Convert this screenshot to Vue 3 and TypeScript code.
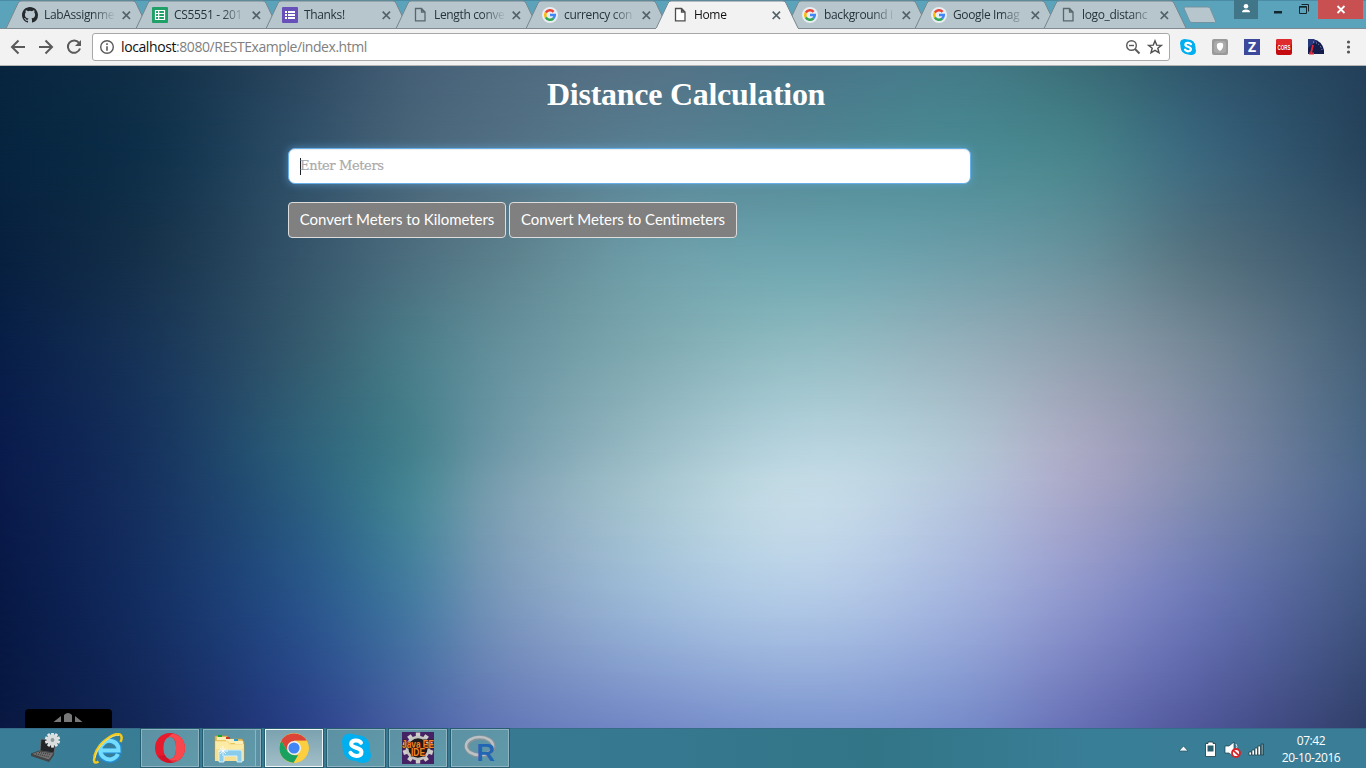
<script setup lang="ts">
interface Tab {
  title: string
  icon: 'github' | 'sheet' | 'form' | 'doc' | 'google'
  width: number
  active?: boolean
}

const tabs: Tab[] = [
  { title: 'LabAssignme', icon: 'github', width: 130 },
  { title: 'CS5551 - 201', icon: 'sheet', width: 130 },
  { title: 'Thanks!', icon: 'form', width: 130 },
  { title: 'Length conve', icon: 'doc', width: 130 },
  { title: 'currency con', icon: 'google', width: 130 },
  { title: 'Home', icon: 'doc', width: 130, active: true },
  { title: 'background i', icon: 'google', width: 129 },
  { title: 'Google Imag', icon: 'google', width: 129 },
  { title: 'logo_distanc', icon: 'doc', width: 129 },
]

// Backdrop: a coarse colour mesh, resampled with cubic curves in both directions.
const meshX = [0, 150, 300, 410, 500, 650, 800, 950, 1080, 1200, 1366]
const meshRows: { y: number; colors: string[] }[] = [
  { y: 0, colors: ['#08253f', '#123048', '#2c4860', '#445f76', '#4d697e', '#557286', '#4a7689', '#457b89', '#3b6e78', '#2f566c', '#24405a'] },
  { y: 84, colors: ['#06243f', '#0f304a', '#2f4f68', '#486579', '#527083', '#588092', '#528593', '#4b8a94', '#47828a', '#3a667d', '#27445c'] },
  { y: 184, colors: ['#07203f', '#16324b', '#34546a', '#4c6d7e', '#5b7f8c', '#6c9ca7', '#6ba3ad', '#6b9da8', '#66909b', '#53717f', '#36536a'] },
  { y: 284, colors: ['#081e47', '#183558', '#345a6e', '#4a7c88', '#64909c', '#80aab2', '#92bcc3', '#96b2bd', '#8e9fad', '#758898', '#446078'] },
  { y: 384, colors: ['#091b4c', '#16335e', '#2d607a', '#437f8c', '#7099a8', '#9bbdc7', '#b8d4df', '#b3c9d6', '#aaa9c4', '#858eab', '#496686'] },
  { y: 434, colors: ['#091a4a', '#163260', '#2a5c7e', '#468595', '#7da0b2', '#a7c6d1', '#c6dce7', '#b6c7de', '#a5a5c8', '#7f8aaf', '#4b648c'] },
  { y: 534, colors: ['#071845', '#142f63', '#285389', '#447aa0', '#7997ba', '#9ebbd9', '#b2cae6', '#a4b5de', '#8d95cb', '#6b77b5', '#415681'] },
  { y: 662, colors: ['#081841', '#14285a', '#2a4088', '#4a60a4', '#6277b7', '#7389c7', '#7c95cf', '#778dcb', '#666fb4', '#4f5799', '#303f69'] },
]

const toRgb = (hex: string) => [1, 3, 5].map((k) => parseInt(hex.slice(k, k + 2), 16))

function cubic(xs: number[], vs: number[], x: number): number {
  const last = xs.length - 1
  let i = 0
  while (i < last - 1 && x > xs[i + 1]) i++
  const slope = (k: number) => {
    const a = Math.max(0, k - 1)
    const b = Math.min(last, k + 1)
    return (vs[b] - vs[a]) / (xs[b] - xs[a])
  }
  const h = xs[i + 1] - xs[i]
  const t = (x - xs[i]) / h
  const t2 = t * t
  const t3 = t2 * t
  return (2 * t3 - 3 * t2 + 1) * vs[i] + (t3 - 2 * t2 + t) * h * slope(i) + (3 * t2 - 2 * t3) * vs[i + 1] + (t3 - t2) * h * slope(i + 1)
}

const stepsX = Array.from({ length: 41 }, (_, k) => (k * 1366) / 40)
const stepsY = Array.from({ length: 25 }, (_, k) => (k * 662) / 24)
const meshY = meshRows.map((r) => r.y)
const fineCols = meshRows.map((r) => {
  const rgb = r.colors.map(toRgb)
  return stepsX.map((x) => [0, 1, 2].map((ch) => cubic(meshX, rgb.map((c) => c[ch]), x)))
})

const meshLayers = stepsY.map((y, i) => {
  const stops = stepsX.map((x, k) => {
    const rgb = [0, 1, 2].map((ch) => cubic(meshY, fineCols.map((r) => r[k][ch]), y).toFixed(1))
    return `rgb(${rgb.join(' ')}) ${x.toFixed(1)}px`
  })
  const fade = i === 0 ? 'none' : `linear-gradient(to bottom, transparent ${stepsY[i - 1]}px, #000 ${y}px)`
  return { backgroundImage: `linear-gradient(to right, ${stops.join(', ')})`, maskImage: fade }
})

const gearTeeth = [0, 36, 72, 108, 144, 180, 216, 252, 288, 324]
</script>

<template>
  <div class="screen">
    <header class="tabstrip">
      <div class="tabs">
        <div v-for="tab in tabs" :key="tab.title" class="tab" :class="{ active: tab.active }" :style="{ width: tab.width + 'px' }">
          <svg class="shape" width="144" height="29" viewBox="0 0 144 29">
            <path class="fill" d="M0 29V28 L12 3 Q13 1 15 1 H127 Q129 1 130 3 L142 28V29 Z" />
            <path class="edge" d="M0.300 28 L12 3.200 Q13 1 15 1 H127 Q129 1 130 3.200 L142 28" />
            <path v-if="!tab.active" class="base" d="M0 28.500H142" />
          </svg>
          <svg v-if="tab.icon === 'github'" class="fav" viewBox="0 0 16 16"><path fill="#24292e" d="M8 0C3.58 0 0 3.58 0 8c0 3.54 2.29 6.53 5.47 7.59.4.07.55-.17.55-.38 0-.19-.01-.82-.01-1.49-2.01.37-2.53-.49-2.69-.94-.09-.23-.48-.94-.82-1.13-.28-.15-.68-.52-.01-.53.63-.01 1.08.58 1.23.82.72 1.21 1.87.87 2.33.66.07-.52.28-.87.51-1.07-1.78-.2-3.64-.89-3.64-3.95 0-.87.31-1.59.82-2.15-.08-.2-.36-1.02.08-2.12 0 0 .67-.21 2.2.82a7.6 7.6 0 0 1 4 0c1.53-1.04 2.2-.82 2.2-.82.44 1.1.16 1.92.08 2.12.51.56.82 1.27.82 2.15 0 3.07-1.87 3.75-3.65 3.95.29.25.54.73.54 1.48 0 1.07-.01 1.93-.01 2.2 0 .21.15.46.55.38A8.01 8.01 0 0 0 16 8c0-4.42-3.58-8-8-8z" /></svg>
          <svg v-else-if="tab.icon === 'sheet'" class="fav" viewBox="0 0 16 16"><rect width="16" height="16" rx="1" fill="#1fa066" /><path fill="none" stroke="#fff" stroke-width="1.2" d="M3.5 3.5h9v9h-9zM3.5 6.500h9M3.5 9.500h9M6.700 3.500v9" /></svg>
          <svg v-else-if="tab.icon === 'form'" class="fav" viewBox="0 0 16 16"><rect width="16" height="16" rx="1" fill="#6750ba" /><path fill="#fff" d="M3 4h2v2H3zM6 4h7v2H6zM3 7h2v2H3zM6 7h7v2H6zM3 10h2v2H3zM6 10h7v2H6z" /></svg>
          <svg v-else-if="tab.icon === 'doc'" class="fav" viewBox="0 0 16 16"><path class="doc" d="M3.500 1.500h6l3.500 3.500v8.800h-9.500zM9.500 1.500v3.500h3.500" /></svg>
          <svg v-else class="fav" viewBox="0 0 16 16">
            <circle cx="8" cy="8" r="8" fill="#e8eef2" />
            <g fill="none" stroke-width="2.5"><path stroke="#ea4335" d="M3.800 5.700A4.800 4.800 0 0 1 11.600 4.800" /><path stroke="#fbbc05" d="M3.800 10.300A4.800 4.800 0 0 1 3.800 5.700" /><path stroke="#34a853" d="M11.300 11.500A4.800 4.800 0 0 1 3.800 10.300" /><path stroke="#4285f4" d="M8 8.100h4.800A4.800 4.800 0 0 1 11.200 11.600" /></g>
          </svg>
          <span class="title">{{ tab.title }}</span>
          <svg class="close" width="9" height="9" viewBox="0 0 9 9"><path d="M.7.700l7.300 7.300M8 .700l-7.300 7.300" /></svg>
        </div>
        <svg class="newtab" width="36" height="18" viewBox="0 0 36 18"><path d="M3.500 1H26Q27.500 1 28.200 2.500L33.500 15Q34 16.500 32.500 16.500H10Q8.300 16.500 7.600 15L2.200 2.800Q1.600 1 3.500 1Z" /></svg>
      </div>
      <div class="controls">
        <svg class="user" width="24" height="19" viewBox="0 0 24 19"><circle cx="12" cy="6.300" r="2.300" fill="#fff" /><path fill="#fff" d="M8 12.300Q8 9.500 12 9.500T16 12.300Z" /></svg>
        <svg class="win" width="60" height="19" viewBox="0 0 60 19"><rect x="16" y="11" width="8" height="2.500" fill="#14262d" /><path fill="none" stroke="#14262d" d="M43.500 4.500h7v7M41.500 6.500h7v7h-7z" /><path stroke="#14262d" d="M41 7.200h8" /></svg>
        <svg class="exit" width="45" height="19" viewBox="0 0 45 19"><path d="M19.500 6l7 7M26.500 6l-7 7" stroke="#fff" stroke-width="1.800" /></svg>
      </div>
    </header>

    <nav class="toolbar">
      <svg class="navs" width="92" height="36" viewBox="0 0 92 36">
        <g fill="none" stroke="#5a5a5a" stroke-width="2"><path d="M25 18H12.500M18.500 11.500L12 18l6.500 6.500M39 18h12.500M45.500 11.500L52 18l-6.500 6.500" /><path d="M79 13.800A6.200 6.200 0 1 0 80 19.500" /></g>
        <path fill="#5a5a5a" d="M81 11v6h-6z" />
      </svg>
      <div class="address">
        <svg width="16" height="16" viewBox="0 0 16 16"><circle cx="8" cy="8" r="6.300" fill="none" stroke="#5a5a5a" stroke-width="1.400" /><path fill="#5a5a5a" d="M7.200 4.300h1.600v1.600H7.200zM7.200 7.200h1.600v4.600H7.200z" /></svg>
        <span class="url"><b>localhost</b>:8080/RESTExample/index.html</span>
        <svg class="zoomout" width="16" height="16" viewBox="0 0 16 16"><g fill="none" stroke="#5a5a5a" stroke-width="1.400"><circle cx="6.500" cy="6.500" r="4.800" /><path d="M4 6.500h5" /><path stroke-width="1.900" d="M10 10l4.500 4.500" /></g></svg>
        <svg class="star" width="16" height="16" viewBox="0 0 16 16"><path fill="none" stroke="#505050" stroke-width="1.400" d="M8 1.800l1.700 4.300 4.700.3-3.600 2.900 1.200 4.500L8 11.300l-4 2.500 1.200-4.500L1.600 6.400l4.700-.3z" /></svg>
      </div>
      <div class="extensions">
        <svg viewBox="0 0 16 16"><path fill="#00aff0" d="M4.500 0Q0 .4 0 4.500Q.6 6 .5 8Q1 15 8 15.400Q10 16 12 16Q16 15.500 16 11.500Q15.400 10 15.500 8Q15 1 8 .6Q6.500 0 4.500 0Z" /><path fill="none" stroke="#fff" stroke-width="2.200" stroke-linecap="round" d="M11 5.200C9.500 3.300 5.400 3.400 5.400 5.700C5.400 8.100 10.900 7.400 10.900 10C10.900 12.800 6.500 13 5 10.700" /></svg>
        <svg viewBox="0 0 16 16"><rect width="16" height="16" rx="2" fill="#999" /><rect x="2" y="2" width="12" height="12" rx="3" fill="#aaa" /><path fill="#fff" d="M5 5Q8 3 11 4.500Q12 9 8 12Q4 10 5 5Z" /></svg>
        <svg viewBox="0 0 16 16"><rect width="16" height="16" fill="#3d4a9c" /><text x="8" y="13" class="zed">Z</text></svg>
        <svg viewBox="0 0 16 16"><rect width="16" height="16" rx="2" fill="#c40b10" /><rect width="16" height="6" rx="2" fill="#df2b2d" /><text x="1.500" y="10.700" class="cors" textLength="13" lengthAdjust="spacingAndGlyphs">CORS</text></svg>
        <svg viewBox="0 0 16 16"><path fill="#151d4d" d="M0 0h5Q14 2 16 11v4H0z" /><path fill="#26377c" d="M0 0h5l4 2L0 9z" /><path stroke="#b5bfdf" stroke-dasharray="1 2" fill="none" d="M5 3Q12 4 14 11" /><path stroke="#e32636" stroke-width="1.800" d="M1 14.500h5M3 14L5 6" fill="none" /></svg>
        <svg class="menu" viewBox="0 0 16 16"><g fill="#555"><circle cx="8.500" cy="3" r="1.600" /><circle cx="8.500" cy="8" r="1.600" /><circle cx="8.500" cy="13" r="1.600" /></g></svg>
      </div>
    </nav>

    <main class="page">
      <div v-for="(layer, i) in meshLayers" :key="i" class="mesh" :style="layer"></div>
      <section class="content">
        <h1>Distance Calculation</h1>
        <div class="field"><i class="caret"></i><span>Enter Meters</span></div>
        <div class="actions">
          <button class="km">Convert Meters to Kilometers</button>
          <button class="cm">Convert Meters to Centimeters</button>
        </div>
      </section>
      <svg class="dock" width="87" height="19" viewBox="0 0 87 19"><path d="M0 19V4Q0 0 4 0H83Q87 0 87 4V19Z" /><path fill="#777" d="M28.500 13l7.500-6v6zM39 13V6q4-4 8 0v7zM50 13V7l7.500 6z" /></svg>
    </main>

    <footer class="taskbar">
      <div class="launch">
        <svg width="32" height="32" viewBox="0 0 32 32">
          <path fill="#222629" stroke="#707477" stroke-width=".8" d="M11 6l15 2-2 12-14-2z" /><path fill="#727070" stroke="#333" stroke-width=".7" d="M9 18l15 2-5 7L1 21z" /><path fill="#444" d="M1 21l18 6v2L1 23zM19 27l5-7v2l-5 7z" /><path stroke="#333" stroke-dasharray="1 1" d="M9 19.500l12 2M6 20.800l13 3" />
          <g transform="translate(22.500 7)"><rect v-for="a in gearTeeth" :key="a" x="-1.400" y="-7.600" width="2.800" height="4" fill="#e5e8e9" :transform="`rotate(${a})`" /><circle r="5.800" fill="#d9ddde" /><circle r="1.900" fill="#8b999c" /></g>
        </svg>
      </div>
      <div class="launch">
        <svg width="32" height="32" viewBox="0 0 32 32">
          <path fill="none" stroke="#248bd0" stroke-width="6" d="M26.500 21.500A9.700 9.700 0 1 1 27 14.500L27 17.700H10" />
          <path fill="none" stroke="#73dcff" stroke-width="4" d="M26 21A9.300 9.300 0 1 1 26.300 14L26.500 17.500H10" />
          <path fill="none" stroke="#f2c91c" stroke-width="2.500" d="M6.500 28.500Q2.500 31 2 27.500Q2 17 13 7.500Q25-2 29 2.500Q30.500 5 28.500 9" /><path fill="none" stroke="#fbed8c" stroke-width=".8" d="M3 25Q5 15 13.500 8Q22 1.500 27 2.500" />
        </svg>
      </div>
      <div class="task">
        <svg width="32" height="32" viewBox="0 0 32 32"><path fill="#e51b2d" fill-rule="evenodd" d="M16 1C7.500 1 1 7.500 1 16s6.500 15 15 15 15-6.500 15-15S24.500 1 16 1zM16 5c4 0 6 4.700 6 11s-2 11-6 11-6.500-4.700-6.500-11S12 5 16 5z" /><path fill="#f9484d" d="M20 1.700Q31 5 31 16T20 30.300Q17 30.500 14 26.500Q22 29 22 16T14 5.500Q17 1.500 20 1.700Z" /><path fill="#a8061c" d="M4 24Q9 30 16 31Q20 31 23 28Q15 30 11 23Z" opacity=".35" /></svg>
      </div>
      <div class="task folder">
        <svg width="34" height="32" viewBox="0 0 34 32"><path fill="#eac35f" stroke="#c3943b" stroke-width=".7" d="M2 4h12l2 3h13l2 3v17H2z" /><path fill="#f8efb8" d="M4 5h9v3H4zM13 7h9v4h-9zM22 9h8v3h-8z" /><path fill="#18a529" d="M5 3h4v2H5z" /><path fill="#ce3827" d="M13 5h4v2h-4z" /><path fill="#229bd9" d="M21 7h4v2h-4z" /><path fill="#f6df91" d="M2 9h13l3 3h13v17H2z" /><path fill="#fff0ae" opacity=".7" d="M3 10h11l3 3h13v4H3z" /><path fill="#8acceb" stroke="#dbf5ff" stroke-width=".9" d="M6 30V20Q6 18 8 18H27Q29 18 29 20V30H24V24H11V30Z" /><path stroke="#fff" stroke-width=".8" d="M5 19h10M10 14v10M7 16l6 6M13 16l-6 6" /></svg>
      </div>
      <div class="task current">
        <svg width="32" height="32" viewBox="0 0 32 32"><circle cx="16" cy="16" r="14.700" fill="#fbcf3f" /><path fill="#db4437" d="M3.300 8.700A14.700 14.700 0 0 1 28.700 8.700H16L9.700 19.600Z" /><path fill="#19a15f" d="M3.300 8.700L9.700 19.600L16 23.300H22.400L15.600 30.700A14.700 14.700 0 0 1 3.300 8.700Z" /><path fill="#fbcf3f" d="M16 8.700H28.700A14.700 14.700 0 0 1 15.600 30.700L22.300 19.600Z" /><circle cx="16" cy="16" r="7" fill="#f1f1f1" /><circle cx="16" cy="16" r="5.600" fill="#4285f4" /></svg>
      </div>
      <div class="task">
        <svg width="32" height="32" viewBox="0 0 32 32"><path fill="#00aff0" d="M9.500 1.500Q2 2 2 9.500Q2.500 12 2.500 16Q4 29 16 29Q19 31 23 31Q31 30 31 23Q30 20 30 16Q29 3 16 3Q13 1.500 9.500 1.500Z" /><path fill="none" stroke="#fff" stroke-width="4" stroke-linecap="round" d="M21 10.700C18.500 7.300 11.200 7.700 11.200 12C11.200 16.500 21.500 15 21.500 20C21.500 25.200 13 25 10.500 20.800" /></svg>
      </div>
      <div class="task">
        <svg width="32" height="32" viewBox="0 0 32 32"><rect width="32" height="32" fill="#452263" /><g transform="translate(16 16)"><rect v-for="a in gearTeeth" :key="a" x="-2.200" y="-15.500" width="4.400" height="6" fill="#cfcdc9" :transform="`rotate(${a})`" /><circle r="11" fill="#1e191b" stroke="#c3c3c2" stroke-width="2.600" /></g><text class="java" x="0" y="15.500" textLength="32" lengthAdjust="spacingAndGlyphs">Java EE</text><text class="java" x="9" y="24" textLength="14" lengthAdjust="spacingAndGlyphs">IDE</text></svg>
      </div>
      <div class="task">
        <svg width="34" height="32" viewBox="0 0 34 32"><ellipse cx="17" cy="14.500" rx="13.500" ry="9" fill="none" stroke="#899398" stroke-width="4.500" /><ellipse cx="16.500" cy="14" rx="13.500" ry="9" fill="none" stroke="#bbc2c6" stroke-width="2.500" /><text x="13.500" y="28.500" class="arr" textLength="18.500" lengthAdjust="spacingAndGlyphs">R</text></svg>
      </div>
      <div class="tray">
        <svg class="status" width="92" height="24" viewBox="0 0 92 24"><path fill="#f3f6f7" stroke="#28545f" stroke-width=".7" d="M3 14l4.500-5 4.500 5z" />
          <path fill="#fff" stroke="#173b44" stroke-width=".8" d="M32 5h5v1.500h2.500v13h-10v-13H32z" /><path fill="#285f6e" d="M31.500 8.500h6v6h-6z" />
          <path fill="#fff" stroke="#193e48" stroke-width=".7" d="M49 9h4l5-4v15l-5-4h-4z" /><path fill="none" stroke="#d5e5e8" d="M60 7q2 3 0 5" /><circle cx="60" cy="16" r="4" fill="#fff" stroke="#d82227" stroke-width="1.800" /><path stroke="#d82227" stroke-width="1.800" d="M57 13.200l6 5.500" />
          <path fill="#fff" stroke="#173b44" stroke-width=".7" d="M73 15h2.500v3H73zM76 13h2.500v5H76zM79 11h2.500v7H79zM82 9h2.500v9H82z" /><path fill="#738d94" stroke="#173b44" stroke-width=".7" d="M85 7h2.500v11H85z" /></svg>
        <div class="clock"><span>07:42</span><span class="date">20-10-2016</span></div>
      </div>
    </footer>
  </div>
</template>

<style>
html, body { margin: 0; overflow: hidden; }
</style>

<style scoped>
.screen { width: 1366px; height: 768px; display: flex; flex-direction: column; overflow: hidden; font-family: "Open Sans", "Noto Sans", sans-serif; }
svg { display: block; flex: none; }
.tabstrip { height: 29px; flex: none; display: flex; justify-content: space-between; background: #5ba3bb; box-shadow: inset 0 1px #4b8ca4, inset 0 -1px #7e8c92; }
.tabs { display: flex; padding-left: 6px; }
.tab { height: 28px; box-sizing: border-box; flex: none; position: relative; display: flex; align-items: center; padding: 2px 0 0 16px; }
.shape { position: absolute; left: 0; top: 0; }
.fill { fill: #b7c6cc; }
.edge { fill: none; stroke: #75868d; stroke-width: 1; }
.base { stroke: #7e8c92; }
.tab.active { z-index: 2; }
.active .fill { fill: #f2f2f2; }
.fav { width: 16px; height: 16px; position: relative; }
.doc { fill: none; stroke: #59666b; stroke-width: 1.3; }
.active .doc { fill: #fff; stroke: #4d4d4d; }
.title { position: relative; margin-left: 6px; width: 74px; flex: none; white-space: nowrap; font-size: 12px; line-height: 18px; color: #26333a; letter-spacing: -.35px; mask-image: linear-gradient(to right, #000 48px, transparent 72px); }
.active .title { color: #111; }
.close { position: relative; margin-left: 4px; }
.close path { fill: none; stroke: #536269; stroke-width: 1.700; }
.newtab { margin: 6px 0 0 9px; }
.newtab path { fill: #b7c6cc; stroke: #7393a0; stroke-width: 1; }
.controls { display: flex; align-items: flex-start; margin-right: 3px; }
.user { background: #417689; }
.exit { background: #c95051; }
.toolbar { height: 37px; flex: none; box-sizing: border-box; display: flex; align-items: center; background: #f2f2f2; border-bottom: 1px solid #b4b4b4; }
.address { width: 1078px; height: 28px; box-sizing: border-box; display: flex; align-items: center; border: 1px solid #a8a8a8; border-radius: 3px; background: #fff; padding: 0 6px; }
.url { margin-left: 6px; flex: 1; font-size: 14px; line-height: 20px; color: #808080; letter-spacing: -.44px; }
.url b { font-weight: 400; color: #111; letter-spacing: -.4px; }
.zoomout { margin-right: 6px; }
.extensions { display: flex; gap: 16px; margin-left: 10px; }
.extensions svg { width: 16px; height: 16px; }
.cors { font: bold 7px "Liberation Sans", sans-serif; fill: #fff; }
.zed { font: bold 14px "Open Sans", sans-serif; fill: #fff; text-anchor: middle; }
.arr { font: bold 23px "Liberation Sans", sans-serif; fill: #2365b5; }
.page { flex: 1; display: grid; grid-template: 662px / 1366px; overflow: hidden; }
.mesh, .content, .dock { grid-area: 1 / 1; }
.content { z-index: 1; padding-left: 288px; }
h1 { margin: 10px 0 0; padding-left: 259px; font: bold 32px/37px "Liberation Serif", serif; letter-spacing: -.27px; color: #fff; white-space: nowrap; }
.field { width: 683px; height: 36px; margin-top: 35px; box-sizing: border-box; display: flex; align-items: center; padding-left: 11px; border: 1px solid #66afe9; border-radius: 7px; background: #fff; box-shadow: inset 0 1px 1px rgba(0,0,0,.075), 0 0 8px rgba(102,175,233,.6); font: 13px/20px "DejaVu Serif", serif; color: #aaa; -webkit-text-stroke: .2px #aaa; }
.field span { letter-spacing: -.36px; }
.caret { width: 1px; height: 17px; margin-right: -1px; background: #222; }
.actions { display: flex; gap: 3px; margin-top: 18px; }
button { height: 36px; box-sizing: border-box; padding: 0 0 2px; border: 1px solid #ddd; border-radius: 4px; background: #808080; color: #fff; font: 15px/20px Lato, sans-serif; letter-spacing: -.05px; white-space: nowrap; }
.km { width: 218px; }
.cm { width: 228px; }
.dock { z-index: 1; align-self: end; margin-left: 25px; }
.taskbar { height: 40px; flex: none; box-sizing: border-box; display: flex; background: linear-gradient(to right, #397d96, #36788f 48%, #327587 64%, #397e97 80%, #397d96); border-top: 1px solid #376c88; padding-left: 15px; }
.launch { width: 62px; display: flex; justify-content: center; align-items: center; }
.launch + .task { margin-left: 2px; }
.task { width: 58px; height: 38px; box-sizing: border-box; margin-right: 4px; display: flex; justify-content: center; align-items: center; background: linear-gradient(135deg, #5c91a4, #609aa9); border: 1px solid #8fb3c0; outline: 1px solid #275d70; }
.folder { box-shadow: inset -4px 0 #5c91a4, inset -5px 0 #8fb3c0; padding-right: 4px; }
.current { background: linear-gradient(#7ba2b0, #a1bec7); border-color: #f0f5f7; }
.tray { margin-left: auto; display: flex; align-items: center; padding-right: 25px; }
.status { margin-right: 13px; }
.clock { width: 60px; display: flex; flex-direction: column; align-items: center; font-size: 12px; line-height: 17px; color: #fff; letter-spacing: -.4px; white-space: nowrap; }
.java { font: bold 10px "Liberation Sans", sans-serif; fill: #f58426; stroke: #351509; stroke-width: 1.2; paint-order: stroke; }
</style>
